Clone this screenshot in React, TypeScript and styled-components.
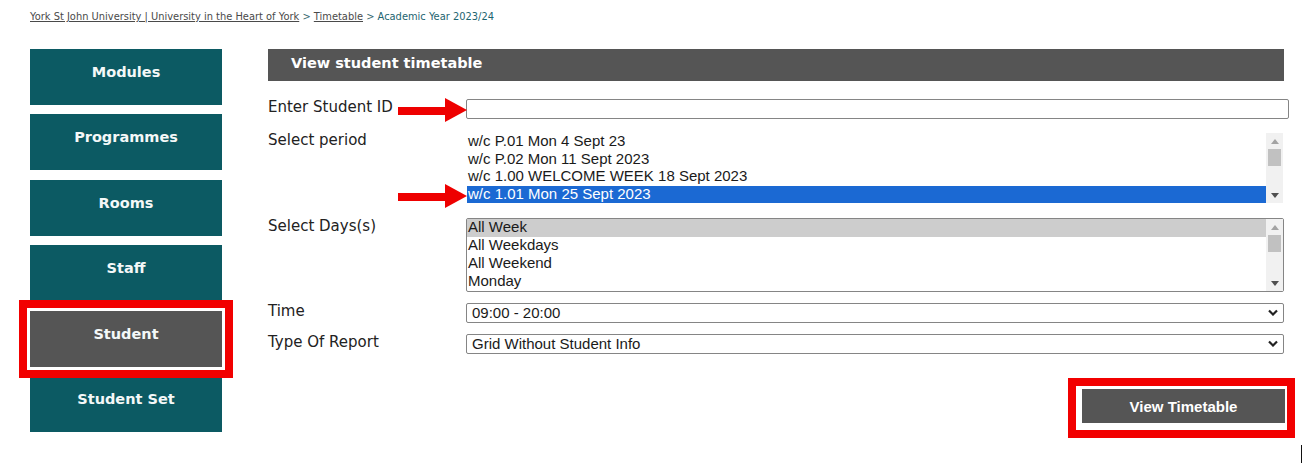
import React from 'react';
import styled, { createGlobalStyle } from 'styled-components';

const GlobalStyle = createGlobalStyle`
  html, body { margin: 0; padding: 0; background: #ffffff; }
  body { font-family: Verdana, "DejaVu Sans", sans-serif; }
  * { box-sizing: border-box; }
`;

const Page = styled.div`
  position: relative;
  width: 1303px;
  height: 468px;
  padding: 10px 0 0 30px;
  overflow: hidden;
`;

const Breadcrumb = styled.div`
  font-size: 9.9px;
  line-height: 13px;
  color: #555;
  white-space: nowrap;
`;

const CrumbLink = styled.a`
  color: #4a4a4a;
  text-decoration: underline;
`;

const CrumbSep = styled.span`
  color: #3b6b72;
`;

const CrumbCurrent = styled.span`
  color: #1d6470;
`;

const Layout = styled.div`
  display: flex;
  align-items: flex-start;
  gap: 46px;
  margin-top: 26px;
`;

const Nav = styled.nav`
  width: 192px;
  display: flex;
  flex-direction: column;
  gap: 9.4px;
`;

const NavItem = styled.a<{ $active?: boolean; $marked?: boolean }>`
  display: block;
  height: 56px;
  padding-top: 14px;
  background: ${p => (p.$active ? '#555555' : '#0c5a63')};
  color: #f4f8f8;
  font-weight: bold;
  font-size: 14.5px;
  line-height: 18px;
  text-align: center;
  text-decoration: none;
  ${p => (p.$marked ? 'outline: 8px solid #f20000; outline-offset: 3px; position: relative; z-index: 1;' : '')}
`;

const Main = styled.main`
  width: 1016px;
`;

const Header = styled.h2`
  margin: 0;
  height: 32px;
  padding: 5px 0 0 23px;
  background: #555555;
  color: #ffffff;
  font-size: 14.5px;
  line-height: 18px;
  font-weight: bold;
`;

const FormRow = styled.div<{ $mt: number }>`
  position: relative;
  display: grid;
  grid-template-columns: 198px 1fr;
  margin-top: ${p => p.$mt}px;
`;

const Label = styled.label`
  font-size: 15px;
  line-height: 16px;
  color: #222;
`;

const TextInput = styled.input`
  display: block;
  width: calc(100% + 5px);
  height: 20px;
  margin: 0;
  border: 1px solid #858585;
  border-radius: 2px;
  background: #fff;
  outline: none;
`;

const ListBox = styled.div<{ $bordered?: boolean }>`
  display: flex;
  height: ${p => (p.$bordered ? 74 : 72)}px;
  border: 1px solid ${p => (p.$bordered ? '#858585' : 'transparent')};
  border-radius: 2px;
  background: #fff;
  font-family: Arial, "Liberation Sans", sans-serif;
  font-size: 15px;
`;

const Options = styled.div`
  flex: 1;
  display: flex;
  flex-direction: column;
`;

const Option = styled.div<{ $sel?: 'blue' | 'gray' }>`
  height: 18px;
  line-height: 16px;
  padding-left: 1px;
  white-space: nowrap;
  color: ${p => (p.$sel === 'blue' ? '#ffffff' : '#1a1a1a')};
  background: ${p => (p.$sel === 'blue' ? '#1b69d3' : p.$sel === 'gray' ? '#cdcdcd' : 'transparent')};
`;

const ScrollBar = styled.div`
  width: 17px;
  background: #f1f1f1;
  display: flex;
  flex-direction: column;
  align-items: center;
`;

const ScrollBtn = styled.div`
  height: 16px;
  width: 100%;
  display: flex;
  align-items: center;
  justify-content: center;
`;

const Thumb = styled.div`
  width: 13px;
  height: 17px;
  background: #c1c1c1;
`;

const Track = styled.div`
  flex: 1;
`;

const SelectBox = styled.div`
  display: flex;
  align-items: center;
  justify-content: space-between;
  height: 20px;
  padding: 0 5px 1px 5px;
  border: 1px solid #858585;
  border-radius: 2px;
  font-family: Arial, "Liberation Sans", sans-serif;
  font-size: 15px;
  color: #1a1a1a;
  background: #fff;
`;

const ButtonRow = styled.div`
  display: flex;
  justify-content: flex-end;
  margin-top: 24px;
  margin-right: -11px;
`;

const Marker = styled.div`
  border: 8px solid #f20000;
  padding: 3px 2px 7px 6px;
  background: #fff;
`;

const ViewButton = styled.button`
  display: block;
  width: 203px;
  height: 34px;
  border: none;
  background: #555555;
  color: #ffffff;
  font-family: Arial, "Liberation Sans", sans-serif;
  font-weight: bold;
  font-size: 15px;
  cursor: pointer;
`;

const ArrowWrap = styled.div<{ $top: number }>`
  position: absolute;
  left: 130px;
  top: ${p => p.$top}px;
  width: 69px;
  height: 24px;
`;

const Cursor = styled.div`
  position: absolute;
  left: 1301px;
  top: 445px;
  width: 1px;
  height: 18px;
  background: #111;
`;

const RedArrow = ({ top }: { top: number }) => (
  <ArrowWrap $top={top}>
    <svg width="69" height="24" viewBox="0 0 69 24">
      <rect x="0" y="9" width="48" height="8" fill="#ee0000" />
      <polygon points="47,0 69,12 47,24" fill="#ee0000" />
    </svg>
  </ArrowWrap>
);

const Up = ({ color }: { color: string }) => (
  <svg width="8" height="5" viewBox="0 0 8 5">
    <polygon points="0,5 4,0 8,5" fill={color} />
  </svg>
);

const Down = ({ color }: { color: string }) => (
  <svg width="8" height="5" viewBox="0 0 8 5">
    <polygon points="0,0 8,0 4,5" fill={color} />
  </svg>
);

const Chevron = () => (
  <svg width="10" height="7" viewBox="0 0 10 7">
    <polyline points="1,1.5 5,5.5 9,1.5" fill="none" stroke="#222" strokeWidth="2.2" />
  </svg>
);

const Scroll = () => (
  <ScrollBar>
    <ScrollBtn>
      <Up color="#a3a3a3" />
    </ScrollBtn>
    <Thumb />
    <Track />
    <ScrollBtn>
      <Down color="#505050" />
    </ScrollBtn>
  </ScrollBar>
);

const navItems = ['Modules', 'Programmes', 'Rooms', 'Staff', 'Student', 'Student Set'];
const periods = ['w/c P.01 Mon 4 Sept 23', 'w/c P.02 Mon 11 Sept 2023', 'w/c 1.00 WELCOME WEEK 18 Sept 2023', 'w/c 1.01 Mon 25 Sept 2023'];
const days = ['All Week', 'All Weekdays', 'All Weekend', 'Monday'];

export default function App() {
  return (
    <>
      <GlobalStyle />
      <Page>
        <Breadcrumb>
          <CrumbLink>York St John University | University in the Heart of York</CrumbLink>
          <CrumbSep> &gt; </CrumbSep>
          <CrumbLink>Timetable</CrumbLink>
          <CrumbSep> &gt; </CrumbSep>
          <CrumbCurrent>Academic Year 2023/24</CrumbCurrent>
        </Breadcrumb>
        <Layout>
          <Nav>
            {navItems.map(n => (
              <NavItem key={n} $active={n === 'Student'} $marked={n === 'Student'}>
                {n}
              </NavItem>
            ))}
          </Nav>
          <Main>
            <Header>View student timetable</Header>
            <FormRow $mt={18}>
              <Label>Enter Student ID</Label>
              <TextInput type="text" />
              <RedArrow top={-1} />
            </FormRow>
            <FormRow $mt={13}>
              <Label>Select period</Label>
              <ListBox>
                <Options>
                  {periods.map((p, i) => (
                    <Option key={p} $sel={i === 3 ? 'blue' : undefined}>{p}</Option>
                  ))}
                </Options>
                <Scroll />
              </ListBox>
              <RedArrow top={52} />
            </FormRow>
            <FormRow $mt={14}>
              <Label>Select Days(s)</Label>
              <ListBox $bordered>
                <Options>
                  {days.map((d, i) => (
                    <Option key={d} $sel={i === 0 ? 'gray' : undefined}>{d}</Option>
                  ))}
                </Options>
                <Scroll />
              </ListBox>
            </FormRow>
            <FormRow $mt={11}>
              <Label>Time</Label>
              <SelectBox>
                <span>09:00 - 20:00</span>
                <Chevron />
              </SelectBox>
            </FormRow>
            <FormRow $mt={11}>
              <Label>Type Of Report</Label>
              <SelectBox>
                <span>Grid Without Student Info</span>
                <Chevron />
              </SelectBox>
            </FormRow>
            <ButtonRow>
              <Marker>
                <ViewButton>View Timetable</ViewButton>
              </Marker>
            </ButtonRow>
          </Main>
        </Layout>
        <Cursor />
      </Page>
    </>
  );
}
